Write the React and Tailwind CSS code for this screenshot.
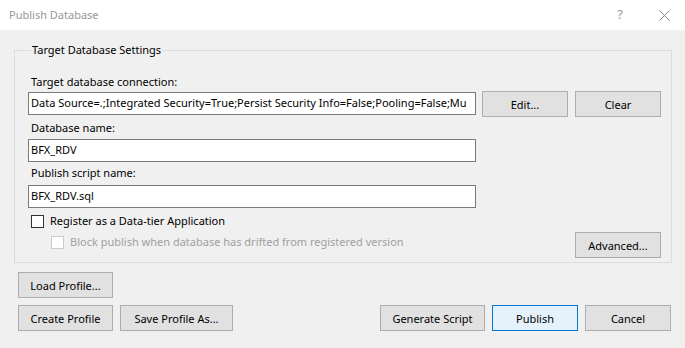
const Btn = ({ children, className = "" }) => (
  <button
    className={`h-[26px] border border-[#adadad] bg-[#e1e1e1] text-[11px] text-black leading-none ${className}`}
  >
    {children}
  </button>
);

const Box = ({ disabled }) => (
  <span
    className={`inline-block w-[13px] h-[13px] border ${
      disabled ? "border-[#cccccc] bg-white" : "border-[#333333] bg-white"
    }`}
  />
);

const Input = ({ value, className = "" }) => (
  <div
    className={`h-[23px] w-[448px] border border-[#7a7a7a] bg-white px-[2px] flex items-center overflow-hidden whitespace-nowrap text-black ${className}`}
  >
    {value}
  </div>
);

export default function App() {
  return (
    <div className="w-[685px] h-[348px] bg-[#f0f0f0] font-['Noto_Sans',sans-serif] text-[11px] text-black overflow-hidden">
      <div className="h-[30px] bg-white flex items-center pl-[9px] pr-[15px] text-[#999999]">
        <span className="flex-1">Publish Database</span>
        <span className="mr-[36px] text-[13px]">?</span>
        <svg width="11" height="11" viewBox="0 0 11 11" className="stroke-[#888888]">
          <path d="M0.5 0.5 L10.5 10.5 M10.5 0.5 L0.5 10.5" strokeWidth="1" />
        </svg>
      </div>

      <div className="px-[14px] pt-[12px]">
        <fieldset className="border border-[#dcdcdc] w-[658px] h-[221px] pl-[13px] pr-[10px]">
          <legend className="ml-[3px] px-[1px] leading-[16px]">Target Database Settings</legend>

          <div className="mt-[16px] leading-[16px] pl-[3px]">Target database connection:</div>
          <div className="mt-[2px] flex items-start">
            <Input
              className="bg-[#f0f0f0]"
              value="Data Source=.;Integrated Security=True;Persist Security Info=False;Pooling=False;Mu"
            />
            <Btn className="w-[86px] ml-[6px] -mt-[1px]">Edit...</Btn>
            <Btn className="w-[86px] ml-[7px] -mt-[1px]">Clear</Btn>
          </div>

          <div className="mt-[3px] leading-[16px] pl-[3px]">Database name:</div>
          <Input className="mt-[3px]" value="BFX_RDV" />

          <div className="mt-[3px] leading-[16px] pl-[3px]">Publish script name:</div>
          <Input className="mt-[4px]" value="BFX_RDV.sql" />

          <div className="flex items-start justify-between">
            <div className="pl-[3px]">
              <div className="mt-[5px] h-[16px] flex items-center gap-[6px]">
                <Box />
                <span>Register as a Data-tier Application</span>
              </div>
              <div className="mt-[5px] h-[16px] flex items-center gap-[6px] pl-[20px] text-[#a0a0a0]">
                <Box disabled />
                <span>Block publish when database has drifted from registered version</span>
              </div>
            </div>
            <Btn className="w-[86px] mt-[24px]">Advanced...</Btn>
          </div>
        </fieldset>

        <div className="pl-[4px] mt-[9px]">
          <Btn className="w-[95px]">Load Profile...</Btn>
          <div className="mt-[7px] flex">
            <Btn className="w-[95px]">Create Profile</Btn>
            <Btn className="w-[113px] ml-[7px]">Save Profile As...</Btn>
            <Btn className="w-[105px] ml-[147px]">Generate Script</Btn>
            <Btn className="w-[86px] ml-[7px] !bg-[#e5f1fb] !border-[#0078d7]">Publish</Btn>
            <Btn className="w-[86px] ml-[7px]">Cancel</Btn>
          </div>
        </div>
      </div>
    </div>
  );
}
